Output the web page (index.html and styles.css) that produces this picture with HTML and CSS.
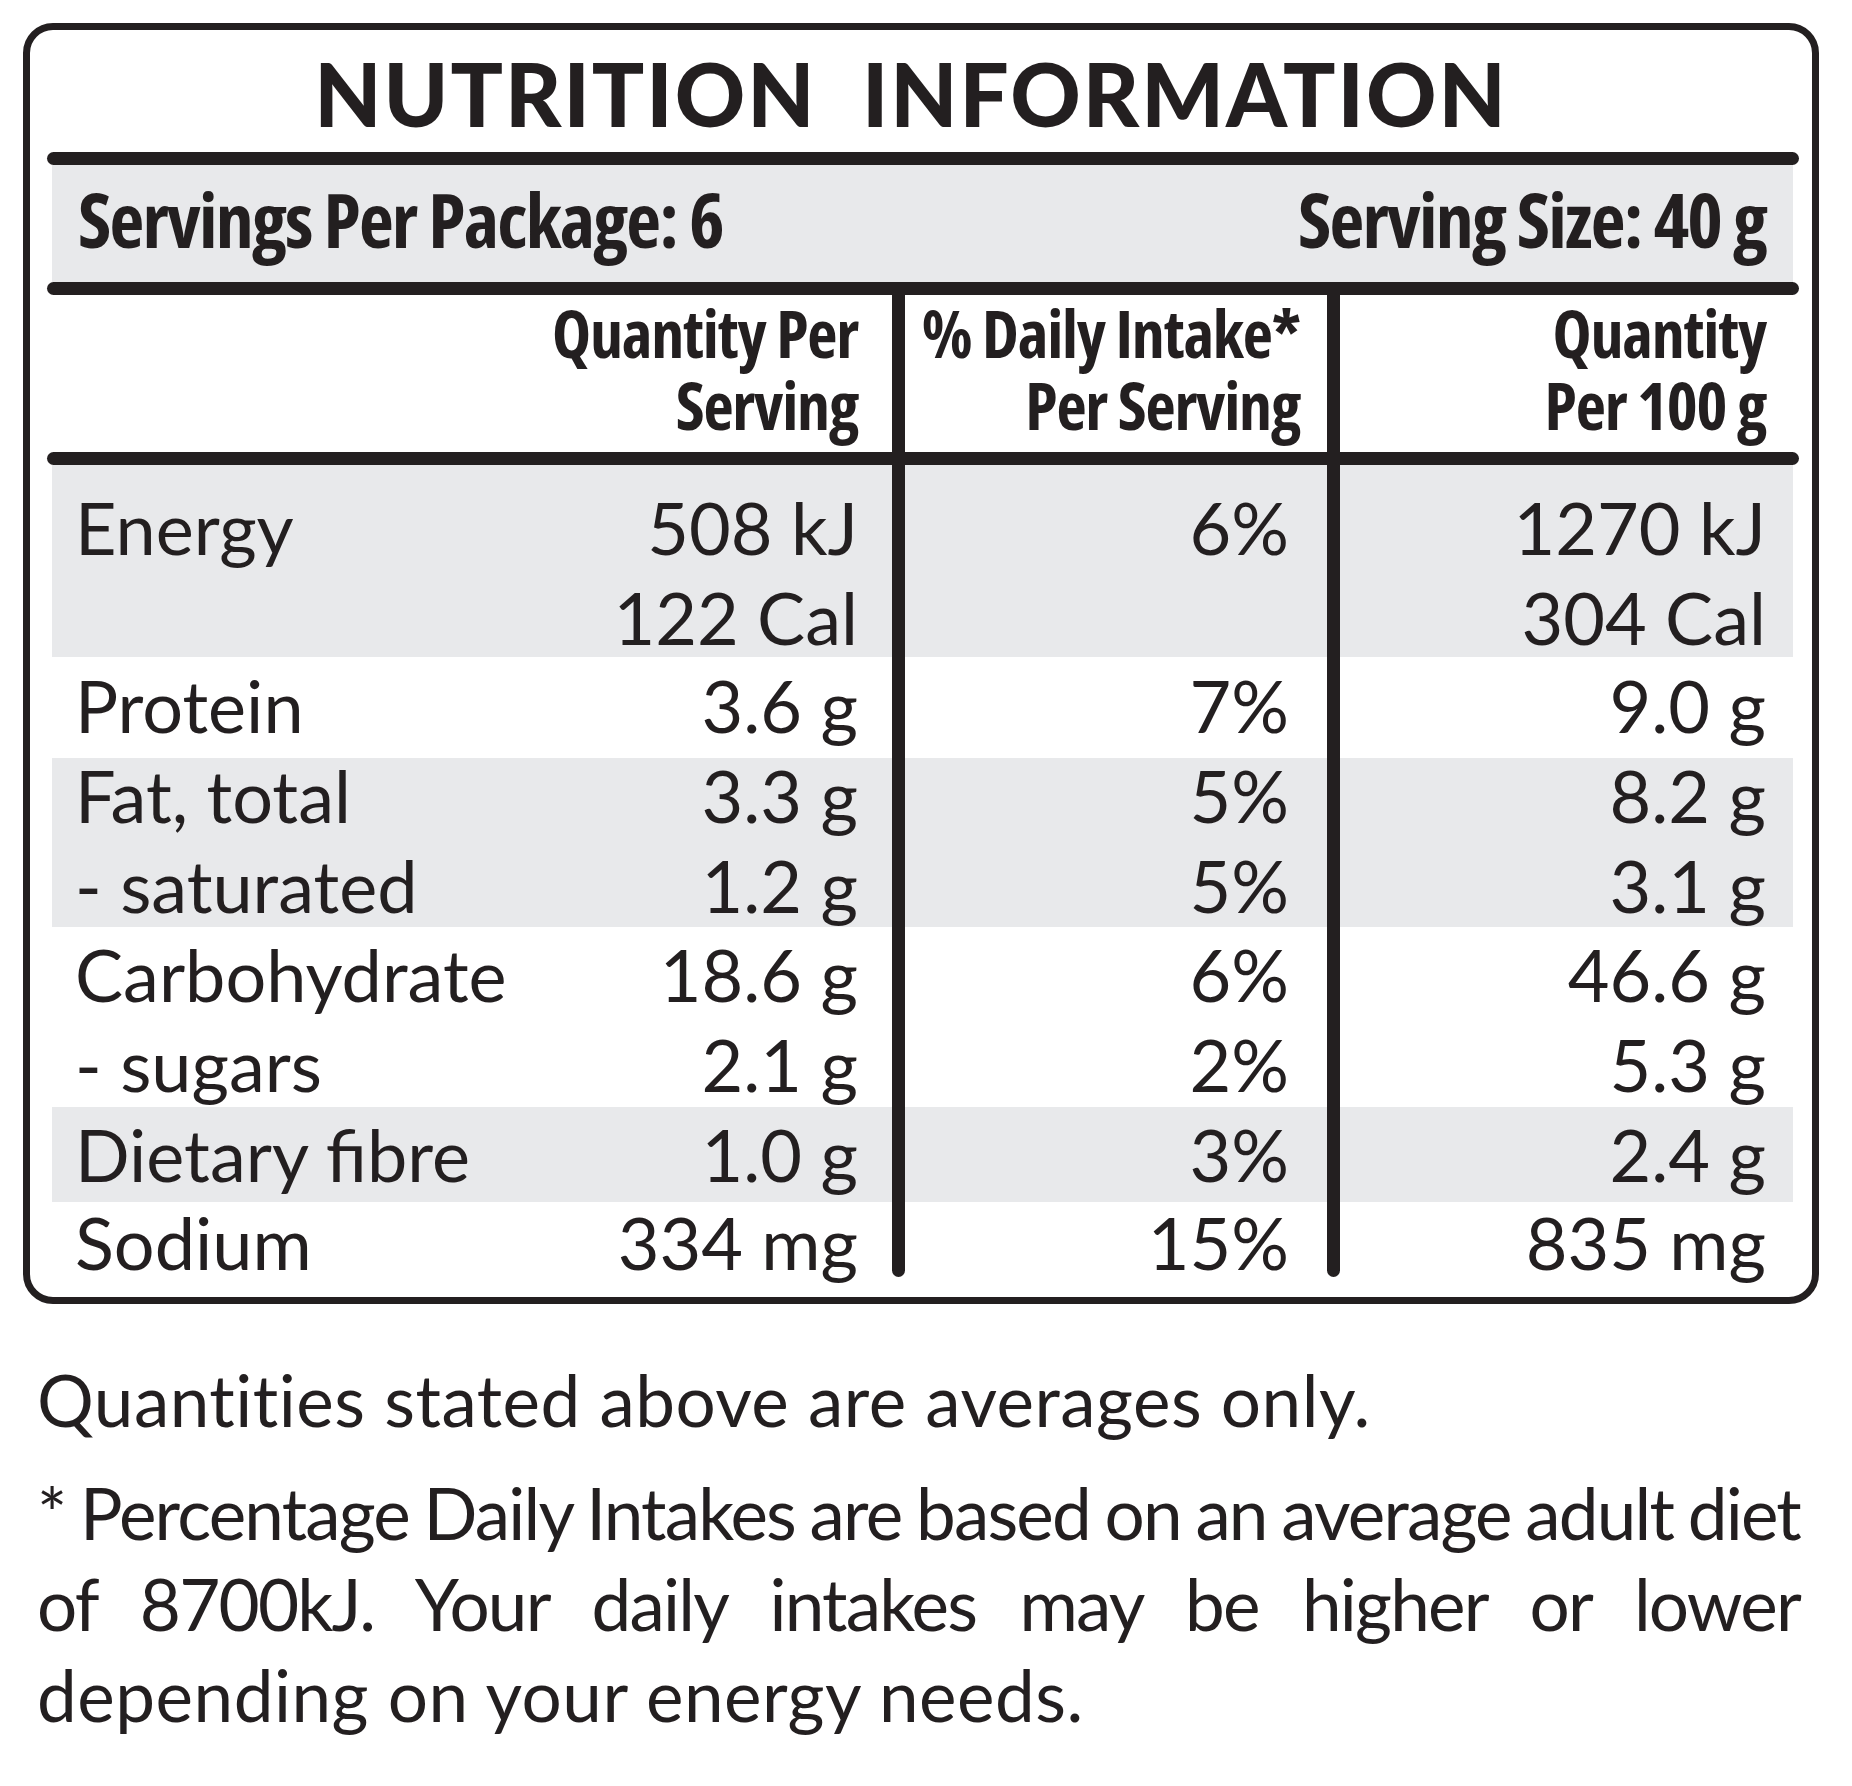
FILE: index.html
```html
<!DOCTYPE html>
<html lang="en">
<head>
<meta charset="utf-8">
<title>Nutrition Information</title>
<link rel="stylesheet" href="styles.css">
</head>
<body>
<div class="label">
  <h1 class="title">NUTRITION&nbsp; INFORMATION</h1>
  <div class="rule"></div>
  <div class="servings">
    <span>Servings Per Package: 6</span>
    <span>Serving Size: 40 g</span>
  </div>
  <div class="table">
    <div class="rule"></div>
    <div class="head">
      <div class="hcell"><div>Quantity Per</div><div>Serving</div></div>
      <div class="hcell"><div>% Daily Intake*</div><div>Per Serving</div></div>
      <div class="hcell"><div>Quantity</div><div>Per 100 g</div></div>
    </div>
    <div class="rule"></div>

    <div class="grp shade g-energy">
      <div class="name">Energy</div><div class="val">508 kJ</div><div class="val">6%</div><div class="val">1270 kJ</div>
      <div class="name"></div><div class="val">122 Cal</div><div class="val"></div><div class="val">304 Cal</div>
    </div>
    <div class="grp g-protein">
      <div class="name">Protein</div><div class="val">3.6 g</div><div class="val">7%</div><div class="val">9.0 g</div>
    </div>
    <div class="grp shade g-fat">
      <div class="name">Fat, total</div><div class="val">3.3 g</div><div class="val">5%</div><div class="val">8.2 g</div>
      <div class="name">- saturated</div><div class="val">1.2 g</div><div class="val">5%</div><div class="val">3.1 g</div>
    </div>
    <div class="grp g-carb">
      <div class="name">Carbohydrate</div><div class="val">18.6 g</div><div class="val">6%</div><div class="val">46.6 g</div>
      <div class="name">- sugars</div><div class="val">2.1 g</div><div class="val">2%</div><div class="val">5.3 g</div>
    </div>
    <div class="grp shade g-fibre">
      <div class="name">Dietary fibre</div><div class="val">1.0 g</div><div class="val">3%</div><div class="val">2.4 g</div>
    </div>
    <div class="grp g-sodium">
      <div class="name">Sodium</div><div class="val">334 mg</div><div class="val">15%</div><div class="val">835 mg</div>
    </div>

    <span class="vdiv vdiv-1"></span>
    <span class="vdiv vdiv-2"></span>
  </div>
</div>

<div class="notes">
  <p class="note note-first">Quantities stated above are averages only.</p>
  <p class="note">
    <span class="jl">* Percentage Daily Intakes are based on an average adult diet</span>
    <span class="jl">of 8700kJ. Your daily intakes may be higher or lower</span>
    <span class="ll">depending on your energy needs.</span>
  </p>
</div>
</body>
</html>
```
FILE: styles.css
```css
* { box-sizing: border-box; }

body {
  margin: 0;
  background: #ffffff;
  color: #231f20;
  font-family: "Lato", "Liberation Sans", sans-serif;
}

.label {
  margin: 23px 0 0 23px;
  width: 1796px;
  border: 7px solid #231f20;
  border-radius: 30px;
  padding: 0 13px 0 17px;
}

.title {
  margin: 0 0 15px;
  padding: 20px 24px 0 0;
  font-family: "Lato", "Liberation Sans", sans-serif;
  font-weight: 900;
  font-size: 87px;
  line-height: 87px;
  letter-spacing: 2px;
  text-align: center;
  white-space: nowrap;
}

.rule {
  height: 13px;
  background: #231f20;
  border-radius: 7px;
}

.servings {
  display: flex;
  justify-content: space-between;
  margin: 0 6px 0 5px;
  height: 117px;
  padding: 16px 27px 0 26px;
  background: #e8e9eb;
  font-family: "Open Sans", "Liberation Sans", sans-serif;
  font-stretch: 75%;
  font-weight: 750;
  font-size: 76px;
  line-height: 76px;
  letter-spacing: -1.8px;
  white-space: nowrap;
}

.table {
  position: relative;
}

.head {
  display: grid;
  grid-template-columns: 1fr 442px 466px;
  margin: 0 6px 0 5px;
  height: 157px;
  padding: 0 27px 0 23px;
  font-family: "Open Sans", "Liberation Sans", sans-serif;
  font-stretch: 75%;
  font-weight: 750;
  font-size: 66px;
  line-height: 72px;
  letter-spacing: -1.2px;
}

.hcell {
  display: flex;
  flex-direction: column;
  align-items: flex-end;
  white-space: nowrap;
  margin-top: 1px;
}

.grp {
  display: grid;
  grid-template-columns: 485px 298px 431px 1fr;
  grid-auto-rows: 72px;
  row-gap: 18px;
  margin: 0 6px 0 5px;
  padding-left: 23px;
  padding-right: 27px;
  font-size: 72px;
  line-height: 72px;
  font-weight: 400;
  white-space: nowrap;
}

.shade { background: #e8e9eb; }

.name { text-align: left; }
.val { text-align: right; }

.g-energy { padding-top: 26px; padding-bottom: 4px; }
.g-protein { padding-top: 12px; padding-bottom: 17px; }
.g-fat { padding-top: 1px; padding-bottom: 6px; }
.g-carb { padding-top: 11px; padding-bottom: 7px; }
.g-fibre { padding-top: 11px; padding-bottom: 12px; }
.g-sodium { padding-top: 4px; padding-bottom: 19px; }

.vdiv {
  position: absolute;
  top: 0;
  width: 13px;
  height: 995px;
  background: #231f20;
  border-radius: 0 0 7px 7px;
}
.vdiv-1 { left: 845px; }
.vdiv-2 { left: 1280px; }

.notes {
  margin: 50px 0 0 37px;
  width: 1763px;
  font-size: 71px;
  line-height: 91px;
  font-weight: 400;
}

.note { margin: 0; }
.note-first { margin-bottom: 22px; white-space: nowrap; letter-spacing: 0.5px; }

.jl {
  display: block;
  text-align: justify;
  text-align-last: justify;
  white-space: nowrap;
  letter-spacing: -1.8px;
  word-spacing: -4px;
}
.ll { display: block; white-space: nowrap; letter-spacing: 0.5px; }
```
